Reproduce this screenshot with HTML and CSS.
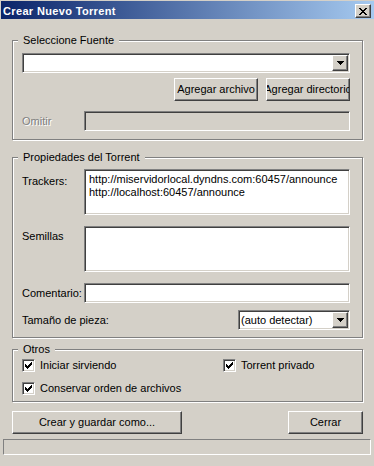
FILE: index.html
```html
<!DOCTYPE html>
<html lang="es">
<head>
    <meta charset="UTF-8">
    <meta name="viewport" content="width=device-width, initial-scale=1.0">
    <title>Crear Nuevo Torrent</title>
    <link rel="stylesheet" href="styles.css">
</head>
<body>
    <div class="window">
        <div class="titlebar">
            <span class="title">Crear Nuevo Torrent</span>
            <div class="close-btn">
                <svg width="8" height="7" viewBox="0 0 8 7"><path d="M0 0h2v1H0z M6 0h2v1H6z M1 1h2v1H1z M5 1h2v1H5z M2 2h4v1H2z M3 3h2v1H3z M2 4h4v1H2z M1 5h2v1H1z M5 5h2v1H5z M0 6h2v1H0z M6 6h2v1H6z" fill="#000"/></svg>
            </div>
        </div>

        <div class="client">
            <div class="group group-source">
                <div class="group-title">Seleccione Fuente</div>
                <div class="combo combo-source">
                    <div class="drop-btn">
                        <svg width="7" height="4" viewBox="0 0 7 4"><path d="M0 0h7v1H0z M1 1h5v1H1z M2 2h3v1H2z M3 3h1v1H3z" fill="#000"/></svg>
                    </div>
                </div>
                <div class="btn-row">
                    <div class="btn btn-add">Agregar archivo</div>
                    <div class="btn btn-add">Agregar directorio</div>
                </div>
                <div class="field-row row-omit">
                    <span class="label label-disabled">Omitir</span>
                    <div class="edit edit-line edit-disabled"></div>
                </div>
            </div>

            <div class="group group-props">
                <div class="group-title">Propiedades del Torrent</div>
                <div class="field-row row-area row-trackers">
                    <span class="label label-trackers">Trackers:</span>
                    <div class="edit edit-area">
                        <div>http://miservidorlocal.dyndns.com:60457/announce</div>
                        <div>http://localhost:60457/announce</div>
                    </div>
                </div>
                <div class="field-row row-area row-seeds">
                    <span class="label label-seeds">Semillas</span>
                    <div class="edit edit-area"></div>
                </div>
                <div class="field-row row-comment">
                    <span class="label">Comentario:</span>
                    <div class="edit edit-line"></div>
                </div>
                <div class="field-row row-piece">
                    <span class="label label-wide">Tamaño de pieza:</span>
                    <div class="combo combo-piece">
                        <span class="combo-text">(auto detectar)</span>
                        <div class="drop-btn">
                            <svg width="7" height="4" viewBox="0 0 7 4"><path d="M0 0h7v1H0z M1 1h5v1H1z M2 2h3v1H2z M3 3h1v1H3z" fill="#000"/></svg>
                        </div>
                    </div>
                </div>
            </div>

            <div class="group group-other">
                <div class="group-title">Otros</div>
                <div class="check-grid">
                    <div class="check-item">
                        <span class="check"><svg width="7" height="7" viewBox="0 0 7 7"><path d="M6 0h1v1H6z M5 1h2v1H5z M0 2h1v1H0z M4 2h3v1H4z M0 3h2v1H0z M3 3h3v1H3z M0 4h5v1H0z M1 5h3v1H1z M2 6h1v1H2z" fill="#000"/></svg></span>
                        <span>Iniciar sirviendo</span>
                    </div>
                    <div class="check-item">
                        <span class="check"><svg width="7" height="7" viewBox="0 0 7 7"><path d="M6 0h1v1H6z M5 1h2v1H5z M0 2h1v1H0z M4 2h3v1H4z M0 3h2v1H0z M3 3h3v1H3z M0 4h5v1H0z M1 5h3v1H1z M2 6h1v1H2z" fill="#000"/></svg></span>
                        <span>Torrent privado</span>
                    </div>
                    <div class="check-item">
                        <span class="check"><svg width="7" height="7" viewBox="0 0 7 7"><path d="M6 0h1v1H6z M5 1h2v1H5z M0 2h1v1H0z M4 2h3v1H4z M0 3h2v1H0z M3 3h3v1H3z M0 4h5v1H0z M1 5h3v1H1z M2 6h1v1H2z" fill="#000"/></svg></span>
                        <span>Conservar orden de archivos</span>
                    </div>
                </div>
            </div>

            <div class="actions">
                <div class="btn btn-create">Crear y guardar como...</div>
                <div class="btn btn-close">Cerrar</div>
            </div>
        </div>

        <div class="statusbar"></div>
    </div>
</body>
</html>
```

FILE: styles.css
```css
body {
    margin: 0;
    font-family: "Liberation Sans", Arial, sans-serif;
    font-size: 11px;
    line-height: 13px;
    color: #000;
    background-color: #d4d0c8;
}

.window {
    width: 374px;
    height: 466px;
    background-color: #d4d0c8;
    overflow: hidden;
}

/* title bar */
.titlebar {
    display: flex;
    justify-content: space-between;
    align-items: flex-start;
    height: 18px;
    margin: 1px 0 0 1px;
    background: linear-gradient(to right, #0a246a, #a6caf0);
}

.title {
    color: #fff;
    font-weight: bold;
    line-height: 16px;
    letter-spacing: 0.35px;
    padding: 2px 0 0 2px;
}

.close-btn {
    width: 16px;
    height: 14px;
    margin: 3px 3px 0 0;
}

/* raised / sunken 3d edges */
.close-btn,
.drop-btn,
.btn {
    box-sizing: border-box;
    display: flex;
    align-items: center;
    justify-content: center;
    background-color: #d4d0c8;
    border: 1px solid;
    border-color: #fff #404040 #404040 #fff;
    box-shadow: inset -1px -1px #808080, inset 1px 1px #d4d0c8;
}

.edit,
.combo,
.check {
    box-sizing: border-box;
    background-color: #fff;
    border: 1px solid;
    border-color: #808080 #fff #fff #808080;
    box-shadow: inset 1px 1px #404040, inset -1px -1px #d4d0c8;
}

.client {
    padding: 0 11px 0 12px;
}

/* group boxes */
.group {
    border: 1px solid #808080;
    box-shadow: 1px 1px #fff, inset 1px 1px #fff;
    padding: 0 12px 0 9px;
}

.group-title {
    width: max-content;
    margin: -7px 0 0 -4px;
    padding: 0 5px;
    background-color: #d4d0c8;
}

.group-source {
    margin-top: 21px;
    padding-bottom: 8px;
}

.group-props {
    margin-top: 17px;
    padding-bottom: 7px;
}

.group-other {
    margin-top: 11px;
    padding-bottom: 6px;
}

/* combo boxes */
.combo {
    display: flex;
    align-items: center;
    height: 20px;
    padding: 1px;
}

.combo-source {
    justify-content: flex-end;
    margin-top: 6px;
}

.combo-piece {
    width: 112px;
}

.combo-text {
    flex: 1;
    padding-left: 1px;
    white-space: nowrap;
}

.drop-btn {
    width: 16px;
    height: 16px;
}

.drop-btn svg {
    display: block;
    margin-top: -1px;
}

/* buttons */
.btn {
    height: 23px;
    white-space: nowrap;
    overflow: hidden;
}

.btn-row {
    display: flex;
    justify-content: flex-end;
    gap: 8px;
    margin-top: 5px;
}

.btn-add {
    width: 84px;
}

.btn-create {
    width: 170px;
}

.btn-close {
    width: 75px;
}

.actions {
    display: flex;
    justify-content: space-between;
    margin-top: 9px;
}

/* label + field rows */
.field-row {
    display: flex;
    align-items: center;
}

.label {
    flex: none;
    width: 62px;
    white-space: nowrap;
}

.label-wide {
    width: auto;
}

.label-disabled {
    color: #808080;
    text-shadow: 1px 1px #fff;
}

.edit-line {
    flex: 1;
    height: 20px;
}

.edit-disabled {
    background-color: #d4d0c8;
}

.edit-area {
    flex: 1;
    height: 46px;
    padding: 3px 4px;
    white-space: nowrap;
    overflow: hidden;
}

.row-area {
    align-items: flex-start;
}

.row-omit {
    margin-top: 10px;
}

.row-trackers {
    margin-top: 5px;
}

.label-trackers {
    padding-top: 6px;
}

.row-seeds {
    margin-top: 11px;
}

.label-seeds {
    padding-top: 4px;
}

.row-comment {
    margin-top: 11px;
}

.row-piece {
    justify-content: space-between;
    margin-top: 7px;
}

/* check boxes */
.check-grid {
    display: grid;
    grid-template-columns: 201px auto;
    row-gap: 10px;
    margin-top: 3px;
}

.check-item {
    display: flex;
    align-items: center;
    gap: 5px;
    height: 13px;
}

.check {
    flex: none;
    width: 13px;
    height: 13px;
    padding: 2px;
}

.check svg {
    display: block;
}

/* status bar */
.statusbar {
    box-sizing: border-box;
    height: 16px;
    margin: 5px 3px 0 3px;
    border: 1px solid;
    border-color: #808080 #fff #fff #808080;
}
```
